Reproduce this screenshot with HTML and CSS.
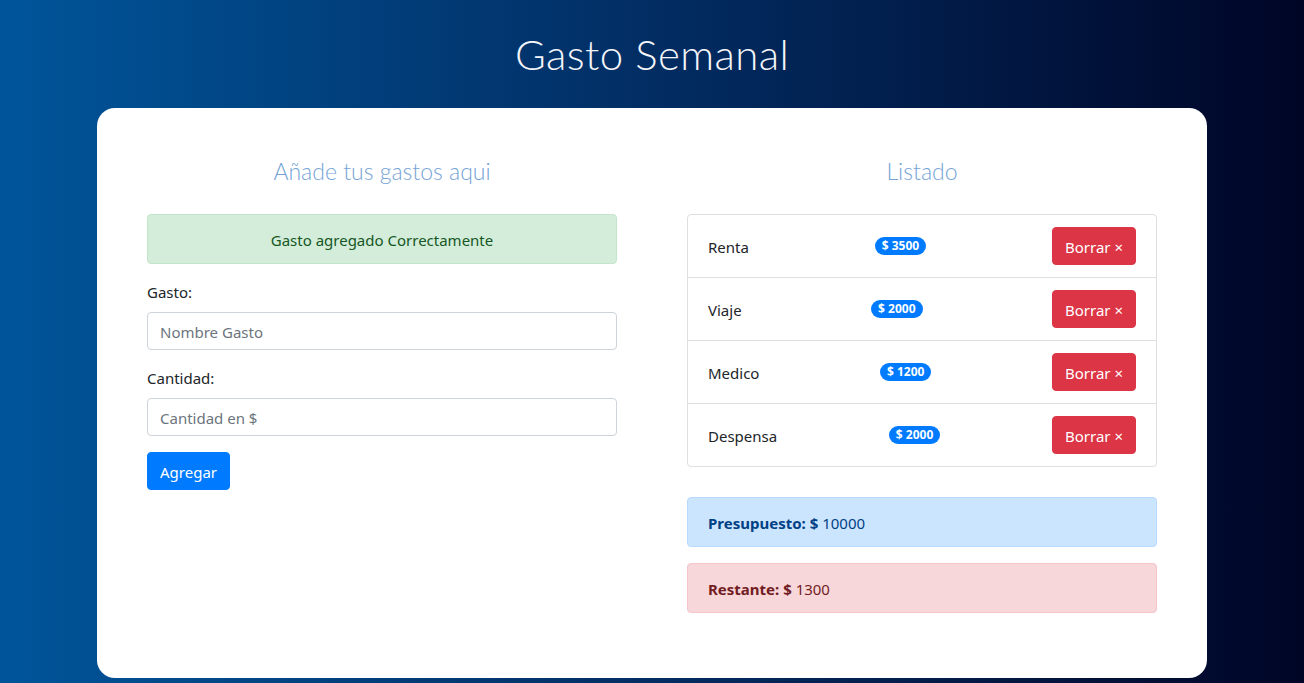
FILE: index.html
```html
<!DOCTYPE html>
<html lang="es">
<head>
<meta charset="utf-8">
<title>Gasto Semanal</title>
<link rel="stylesheet" href="styles.css">
</head>
<body>
<header class="header">
  <h1 class="title">Gasto Semanal</h1>
</header>
<main class="card">
  <section class="col">
    <h2 class="col-title">Añade tus gastos aqui</h2>
    <div class="alert alert-success alert-center">Gasto agregado Correctamente</div>
    <form class="form">
      <div class="form-group">
        <label class="label">Gasto:</label>
        <input class="input" type="text" placeholder="Nombre Gasto">
      </div>
      <div class="form-group">
        <label class="label">Cantidad:</label>
        <input class="input" type="text" placeholder="Cantidad en $">
      </div>
      <button type="button" class="btn btn-primary">Agregar</button>
    </form>
  </section>
  <section class="col">
    <h2 class="col-title">Listado</h2>
    <ul class="list">
      <li class="list-item"><span class="item-name">Renta</span><span class="badge">$ 3500</span><button type="button" class="btn btn-danger">Borrar &times;</button></li>
      <li class="list-item"><span class="item-name">Viaje</span><span class="badge">$ 2000</span><button type="button" class="btn btn-danger">Borrar &times;</button></li>
      <li class="list-item"><span class="item-name">Medico</span><span class="badge">$ 1200</span><button type="button" class="btn btn-danger">Borrar &times;</button></li>
      <li class="list-item"><span class="item-name">Despensa</span><span class="badge">$ 2000</span><button type="button" class="btn btn-danger">Borrar &times;</button></li>
    </ul>
    <div class="alert alert-info"><strong>Presupuesto: $</strong> 10000</div>
    <div class="alert alert-danger"><strong>Restante: $</strong> 1300</div>
  </section>
</main>
</body>
</html>
```

FILE: styles.css
```css
* { box-sizing: border-box; }
html, body { margin: 0; padding: 0; }
body {
  min-height: 100vh;
  background: linear-gradient(to right, #00559a 0%, #022d63 50%, #000526 100%);
  font-family: "Noto Sans", "Open Sans", sans-serif;
  font-size: 15px;
  line-height: 24px;
  color: #212529;
}
.header {
  height: 108px;
  display: flex;
  align-items: center;
  justify-content: center;
}
.title {
  margin: 0;
  font-family: Lato, "Open Sans", sans-serif;
  font-weight: 300;
  font-size: 42px;
  line-height: 50px;
  color: #f4f6fa;
  letter-spacing: 0.4px;
}
.card {
  width: 1110px;
  margin: 0 auto;
  background: #ffffff;
  border-radius: 18px;
  padding: 48px 50px 65px;
  display: grid;
  grid-template-columns: 1fr 1fr;
  column-gap: 70px;
  align-items: start;
}
.col-title {
  margin: 0 0 28px;
  text-align: center;
  font-family: Lato, "Open Sans", sans-serif;
  font-weight: 300;
  font-size: 23px;
  line-height: 30px;
  color: #75a3d6;
}
.alert {
  padding: 13px 20px 11px;
  border: 1px solid transparent;
  border-radius: 4px;
  margin-bottom: 16px;
}
.alert-center { text-align: center; }
.alert-success { background: #d4edda; border-color: #c3e6cb; color: #155724; }
.alert-info { background: #cce5ff; border-color: #b8daff; color: #004085; margin-top: 30px; }
.alert-danger { background: #f8d7da; border-color: #f5c6cb; color: #721c24; margin-bottom: 0; }
.alert strong { font-weight: 700; }
.form { margin: 0; }
.form-group { margin-bottom: 16px; }
.label { display: block; margin-bottom: 8px; height: 24px; }
.input {
  display: block;
  width: 100%;
  height: 38px;
  padding: 7px 12px 5px;
  font: inherit;
  color: #495057;
  border: 1px solid #ced4da;
  border-radius: 4px;
  background: #fff;
}
.input::placeholder { color: #6c757d; }
.btn {
  display: inline-block;
  font: inherit;
  height: 38px;
  padding: 7px 12px 5px;
  border: 1px solid transparent;
  border-radius: 4px;
  color: #fff;
  cursor: pointer;
}
.btn-primary { background: #007bff; border-color: #007bff; }
.btn-danger { background: #dc3545; border-color: #dc3545; }
.list {
  list-style: none;
  margin: 0;
  padding: 0;
  border: 1px solid rgba(0,0,0,.125);
  border-radius: 4px;
}
.list-item {
  display: flex;
  justify-content: space-between;
  align-items: center;
  padding: 12px 20px;
  border-bottom: 1px solid rgba(0,0,0,.125);
}
.list-item:last-child { border-bottom: 0; }
.item-name { padding-top: 2px; }
.badge {
  display: inline-block;
  background: #007bff;
  color: #fff;
  font-size: 12px;
  font-weight: 700;
  line-height: 12px;
  padding: 3px 7px;
  border-radius: 10px;
}
```
